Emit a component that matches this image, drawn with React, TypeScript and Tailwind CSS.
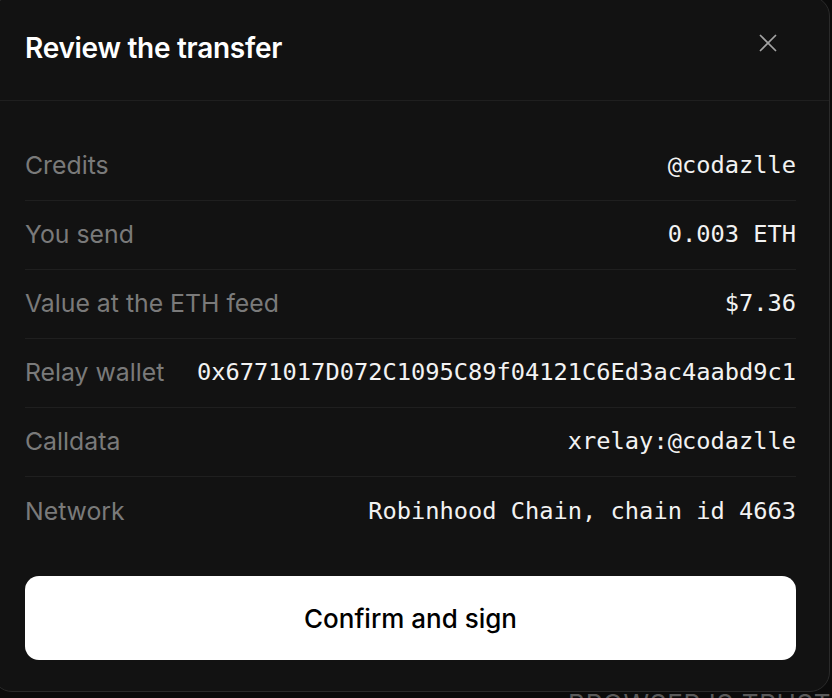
import { X } from 'lucide-react';

const rows = [
  { label: 'Credits', value: '@codazlle' },
  { label: 'You send', value: '0.003 ETH' },
  { label: 'Value at the ETH feed', value: '$7.36' },
  { label: 'Relay wallet', value: '0x6771017D072C1095C89f04121C6Ed3ac4aabd9c1' },
  { label: 'Calldata', value: 'xrelay:@codazlle' },
  { label: 'Network', value: 'Robinhood Chain, chain id 4663' },
];

export default function App() {
  return (
    <div className="relative h-[698px] w-[832px] overflow-hidden bg-[#0b0b0b] font-['Inter',sans-serif]">
      {/* page behind the dialog */}
      <div className="absolute left-[568px] top-[684px] whitespace-nowrap text-[26px] uppercase tracking-wide text-[#5a5a5a]">
        Browser is trusted exc
      </div>

      {/* dialog */}
      <div className="absolute -left-[8px] -top-[4px] flex w-[838px] flex-col rounded-[20px] border border-[#2a2a2a] bg-[#121212]">
        <div className="flex h-[104px] items-center justify-between border-b border-[#1f1f1f] pl-[32px] pr-[46px]">
          <h2 className="mb-[2px] text-[28px] font-semibold tracking-[-0.01em] text-white">Review the transfer</h2>
          <X className="mb-[12px] h-[30px] w-[30px] text-[#a3a3a3]" strokeWidth={1.4} />
        </div>

        <div className="flex flex-col px-[32px] pb-[31px] pt-[31px] pr-[33px]">
          <div className="flex flex-col">
            {rows.map((row, i) => (
              <div
                key={row.label}
                className={
                  'flex h-[69px] items-center justify-between gap-6 ' +
                  (i < rows.length - 1 ? 'border-b border-[#1f1f1f]' : '')
                }
              >
                <span className="whitespace-nowrap text-[24.8px] text-[#7a7a7a]">{row.label}</span>
                <span className="whitespace-nowrap font-['DejaVu_Sans_Mono',monospace] text-[23.7px] text-[#f2f2f2]">
                  {row.value}
                </span>
              </div>
            ))}
          </div>

          <button className="mt-[30px] h-[84px] w-full rounded-[14px] bg-white text-[26px] font-medium text-black">
            Confirm and sign
          </button>
        </div>
      </div>
    </div>
  );
}
